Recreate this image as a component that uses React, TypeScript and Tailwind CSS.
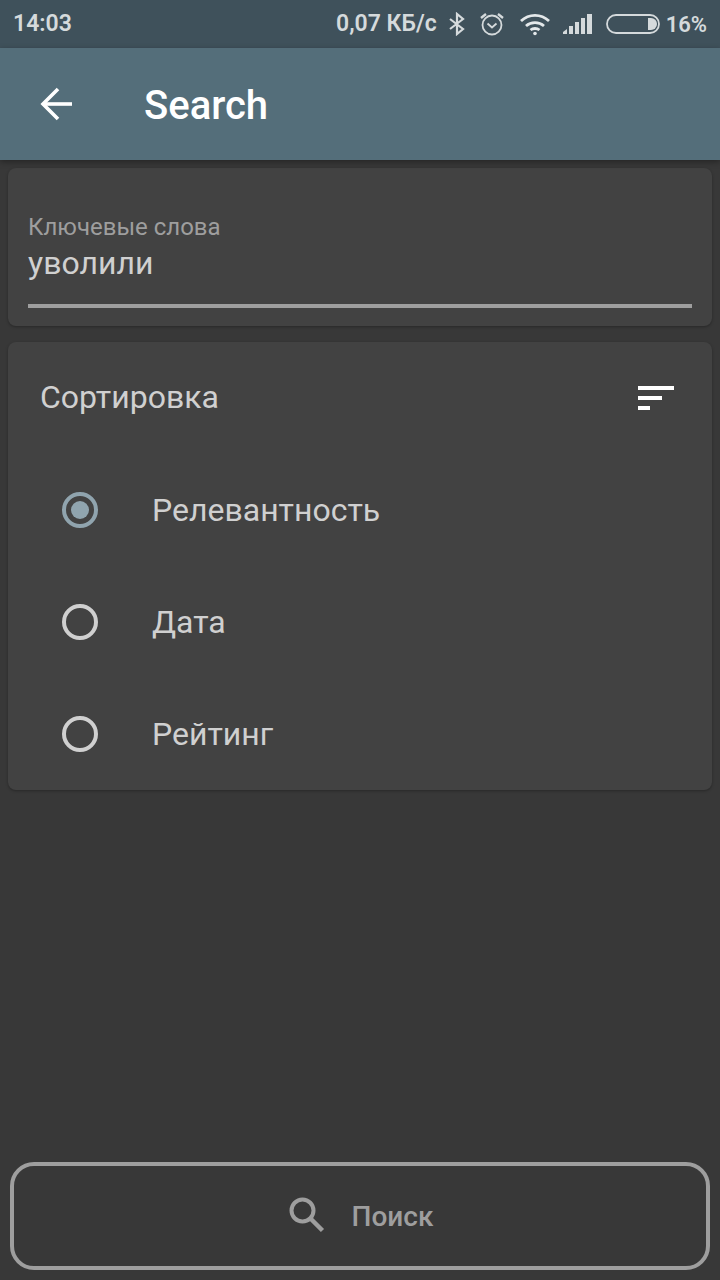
function StatusIcons() {
  return (
    <div className="flex items-center">
      <svg width="18" height="24" viewBox="0 0 18 24" fill="none" stroke="#d5dadc" strokeWidth="2.2" className="ml-[11px]">
        <path d="M2 7l13 10-6 5V2l6 5L2 17" />
      </svg>
      <svg width="28" height="26" viewBox="0 0 28 26" fill="none" stroke="#d5dadc" strokeWidth="1.8" className="ml-[12px]">
        <circle cx="14" cy="14" r="9.500" />
        <path d="M9.500 12.500l4.500 4 4.500-4" />
        <path d="M3 7l5-4M25 7l-5-4" strokeWidth="2.400" />
      </svg>
      <svg width="32" height="24" viewBox="0 0 32 24" fill="none" stroke="#e4e8ea" strokeWidth="2.800" className="ml-[13px]">
        <path d="M2 9c8-7.500 20-7.500 28 0" />
        <path d="M7 14c5-4.500 13-4.500 18 0" />
        <path d="M11.500 18c2.500-2 6.500-2 9 0" />
        <circle cx="16" cy="21.500" r="1.800" fill="#e4e8ea" stroke="none" />
      </svg>
      <svg width="32" height="22" viewBox="0 0 32 22" fill="#d5dadc" className="ml-[11px]">
        <path d="M1 19l4-3v5H1z" />
        <rect x="7" y="13" width="4" height="8" />
        <rect x="13" y="9" width="4" height="12" />
        <rect x="19" y="5" width="4" height="16" />
        <rect x="25" y="1" width="5" height="20" />
      </svg>
      <svg width="54" height="20" viewBox="0 0 54 20" fill="none" className="ml-[12px]">
        <rect x="1" y="1" width="52" height="18" rx="9" stroke="#d5dadc" strokeWidth="1.800" />
        <path d="M42 4h3a6 6 0 0 1 0 12h-3z" fill="#d5dadc" />
      </svg>
    </div>
  );
}

function RadioRow({ label, checked }: { label: string; checked?: boolean }) {
  return (
    <div className="flex h-[112px] items-center pl-[54px]">
      {checked ? (
        <div className="flex h-[36px] w-[36px] items-center justify-center rounded-full border-[4px] border-[#90a4ae]">
          <div className="h-[18px] w-[18px] rounded-full bg-[#90a4ae]" />
        </div>
      ) : (
        <div className="h-[36px] w-[36px] rounded-full border-[4px] border-[#d0d0d0]" />
      )}
      <span className="ml-[54px] text-[32px] text-[#d0d0d0]">{label}</span>
    </div>
  );
}

export default function App() {
  return (
    <div className="flex h-[1280px] w-[720px] flex-col overflow-hidden bg-[#383838] font-['Roboto',sans-serif]">
      <div className="flex h-[48px] shrink-0 items-center justify-between bg-[#3f515b] pl-[13px] pr-[13px] text-[#d5dadc]">
        <span className="text-[23px] font-semibold">14:03</span>
        <div className="flex items-center">
          <span className="text-[23px] font-semibold">0,07 КБ/с</span>
          <StatusIcons />
          <span className="ml-[6px] text-[22px] font-semibold">16%</span>
        </div>
      </div>

      <div className="z-10 flex h-[112px] shrink-0 items-center bg-[#546e7a] shadow-[0_2px_6px_rgba(0,0,0,0.35)]">
        <svg width="36" height="36" viewBox="0 0 36 36" fill="none" stroke="#ffffff" strokeWidth="3.600" className="ml-[38px]">
          <path d="M34 18H5" />
          <path d="M20 3L5 18l15 15" />
        </svg>
        <h1 className="ml-[70px] mt-[3px] text-[40px] font-medium text-white">Search</h1>
      </div>

      <div className="mx-[8px] mt-[8px] flex h-[158px] flex-col rounded-[8px] bg-[#424242] px-[20px] shadow-[0_1px_3px_rgba(0,0,0,0.3)]">
        <span className="mt-[45px] text-[24px] leading-[28px] text-[#9e9e9e]">Ключевые слова</span>
        <span className="mt-[3px] text-[32px] leading-[38px] text-[#d0d0d0]">уволили</span>
        <div className="mt-[22px] h-[4px] bg-[#9e9e9e]" />
      </div>

      <div className="mx-[8px] mt-[16px] flex h-[448px] flex-col rounded-[8px] bg-[#424242] shadow-[0_1px_3px_rgba(0,0,0,0.3)]">
        <div className="flex h-[112px] items-center justify-between pl-[32px] pr-[38px]">
          <span className="mb-[2px] text-[32px] text-[#d0d0d0]">Сортировка</span>
          <div className="flex w-[36px] flex-col gap-[6px]">
            <div className="h-[4px] w-[36px] bg-white" />
            <div className="h-[4px] w-[24px] bg-white" />
            <div className="h-[4px] w-[12px] bg-white" />
          </div>
        </div>
        <RadioRow label="Релевантность" checked />
        <RadioRow label="Дата" />
        <RadioRow label="Рейтинг" />
      </div>

      <div className="mx-[10px] mb-[10px] mt-auto flex h-[108px] items-center justify-center rounded-[24px] border-[4px] border-[#9e9e9e]">
        <svg width="44" height="44" viewBox="0 0 44 44" fill="none" stroke="#9e9e9e" strokeWidth="4">
          <circle cx="15.500" cy="16.500" r="11" />
          <path d="M23.500 24.500l12 12" strokeWidth="4.500" />
        </svg>
        <span className="ml-[21px] mt-[2px] text-[28px] font-medium text-[#9e9e9e]">Поиск</span>
      </div>
    </div>
  );
}
